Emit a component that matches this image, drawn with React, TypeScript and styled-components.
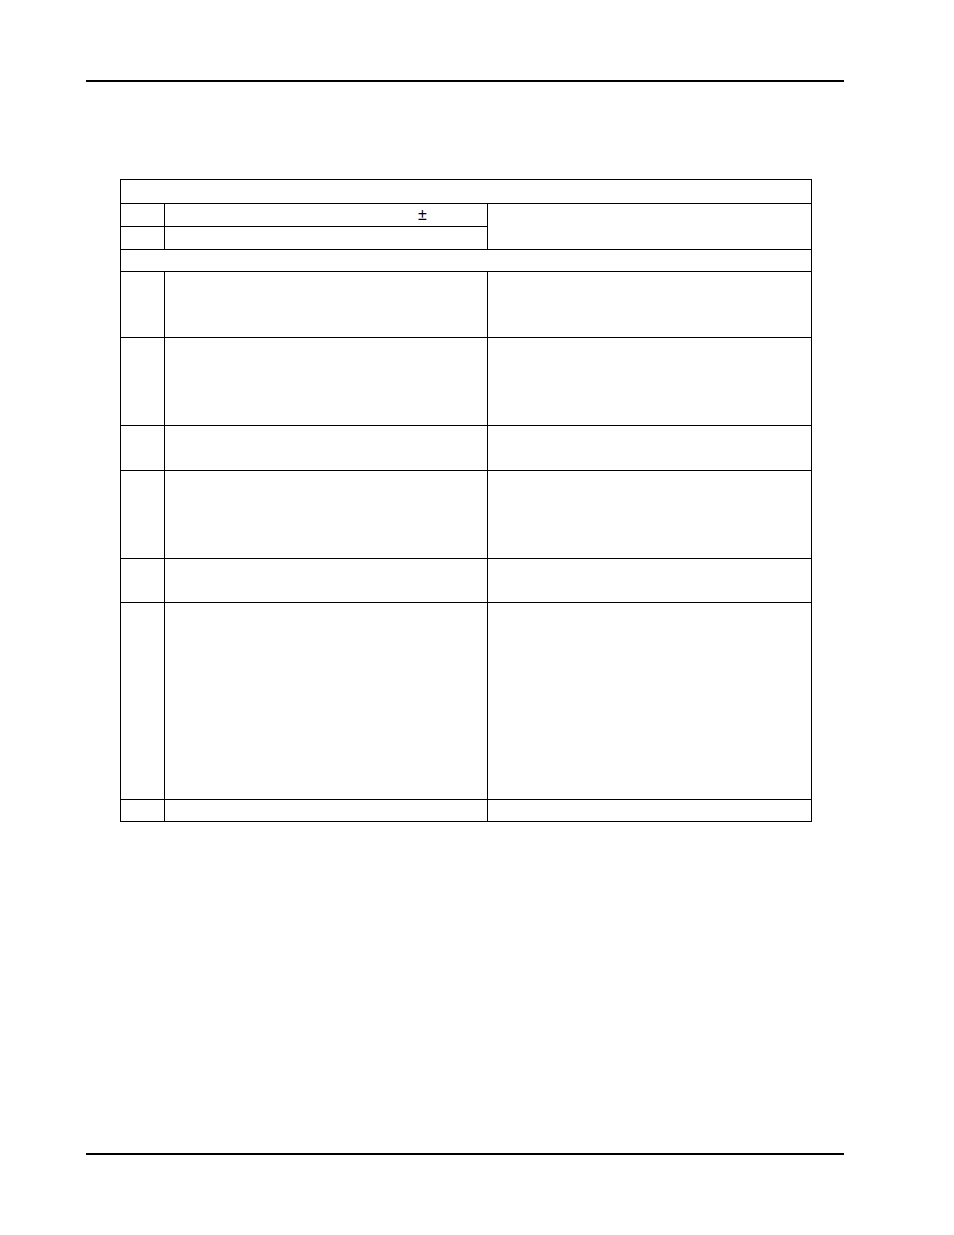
import React from 'react';
import styled, { createGlobalStyle } from 'styled-components';

const GlobalStyle = createGlobalStyle`
  html, body {
    margin: 0;
    padding: 0;
    background: #fff;
  }
  body {
    font-family: "Liberation Sans", Arial, sans-serif;
    color: #000;
  }
`;

const Page = styled.div`
  width: 954px;
  height: 1235px;
  display: flex;
  flex-direction: column;
  padding-top: 80px;
  box-sizing: border-box;
`;

const Rule = styled.div<{ gap?: number }>`
  margin-left: 86px;
  margin-top: ${({ gap }) => gap ?? 0}px;
  width: 758px;
  height: 2px;
  background: #000;
`;

const Table = styled.table`
  margin-left: 120px;
  margin-top: 97px;
  width: 692px;
  border-collapse: collapse;
  table-layout: fixed;
  border: 1px solid #000;
`;

const Row = styled.tr<{ h: number }>`
  height: ${({ h }) => h}px;
`;

const Cell = styled.td<{ pad?: number }>`
  border: 1px solid #000;
  padding: 0 0 0 ${({ pad }) => pad ?? 0}px;
  vertical-align: middle;
  font-size: 13px;
  line-height: 14px;
`;

const Sign = styled.span`
  display: inline-block;
  font-size: 16px;
  line-height: 16px;
  color: #000;
`;

const bodyRows = [66, 88, 45, 88, 44, 197, 22];

const App: React.FC = () => (
  <>
    <GlobalStyle />
    <Page>
      <Rule />
      <Table>
        <colgroup>
          <col style={{ width: 44 }} />
          <col style={{ width: 323 }} />
          <col style={{ width: 324 }} />
        </colgroup>
        <tbody>
          <Row h={24}>
            <Cell colSpan={3} />
          </Row>
          <Row h={23}>
            <Cell />
            <Cell pad={253}>
              <Sign>±</Sign>
            </Cell>
            <Cell rowSpan={2} />
          </Row>
          <Row h={23}>
            <Cell />
            <Cell />
          </Row>
          <Row h={22}>
            <Cell colSpan={3} />
          </Row>
          {bodyRows.map((h, i) => (
            <Row key={i} h={h}>
              <Cell />
              <Cell />
              <Cell />
            </Row>
          ))}
        </tbody>
      </Table>
      <Rule gap={331} />
    </Page>
  </>
);

export default App;
